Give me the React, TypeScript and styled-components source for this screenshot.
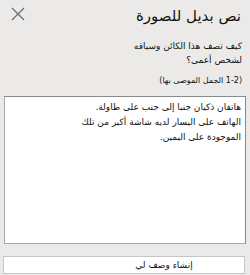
import React from "react";
import styled, { createGlobalStyle } from "styled-components";

const Global = createGlobalStyle`
  html, body { margin: 0; padding: 0; background: #ebeae8; }
  body { font-family: "DejaVu Sans", "Noto Sans", sans-serif; }
`;

const Pane = styled.div`
  width: 250px;
  height: 275px;
  box-sizing: border-box;
  background: #ebeae8;
  display: flex;
  flex-direction: column;
  direction: rtl;
  padding: 0 8px 0 9px;
  color: #111;
`;

const Header = styled.div`
  display: flex;
  align-items: flex-start;
  justify-content: space-between;
  padding-top: 7px;
  height: 30px;
  box-sizing: border-box;
`;

const Title = styled.h1`
  margin: 0;
  font-size: 15px;
  font-weight: normal;
  line-height: 18px;
  margin-right: 1px;
`;

const Close = styled.button`
  border: none;
  background: none;
  padding: 0;
  width: 14px;
  height: 14px;
  margin-left: 2px;
  display: flex;
`;

const Question = styled.p`
  margin: 9px 0 0 0;
  font-size: 9px;
  line-height: 14px;
`;

const Hint = styled.p`
  margin: 8px 0 0 0;
  font-size: 8px;
  line-height: 12px;
`;

const TextArea = styled.div`
  margin: 9px -4px 0 -5px;
  height: 148px;
  box-sizing: border-box;
  background: #fff;
  border: 1px solid #a9a9a9;
  border-top-color: #8a8a8a;
  border-right-color: #8a8a8a;
  padding: 3px 4px 0 4px;
  font-size: 9px;
  line-height: 15px;
  white-space: pre-line;
`;

const Button = styled.button`
  margin: 12px -3px 0 -6px;
  height: 18px;
  box-sizing: border-box;
  background: #fff;
  border: 1px solid #c6c6c6;
  font-family: inherit;
  font-size: 9px;
  color: #111;
  direction: rtl;
  padding: 0 0 0 80px;
  display: flex;
  align-items: center;
  justify-content: center;
`;

export default function App() {
  return (
    <>
      <Global />
      <Pane>
        <Header>
          <Title>نص بديل للصورة</Title>
          <Close aria-label="إغلاق">
            <svg width="14" height="14" viewBox="0 0 14 14">
              <path d="M1 1 L13 13 M13 1 L1 13" stroke="#6b6b6b" strokeWidth="1.2" fill="none" />
            </svg>
          </Close>
        </Header>
        <Question>
          كيف تصف هذا الكائن وسياقه
          <br />
          لشخص أعمى؟
        </Question>
        <Hint>(1-2 الجمل الموصى بها)</Hint>
        <TextArea>
          {"هاتفان ذكيان جنبا إلى جنب على طاولة.\nالهاتف على اليسار لديه شاشة أكبر من تلك\nالموجودة على اليمين."}
        </TextArea>
        <Button>إنشاء وصف لي</Button>
      </Pane>
    </>
  );
}
